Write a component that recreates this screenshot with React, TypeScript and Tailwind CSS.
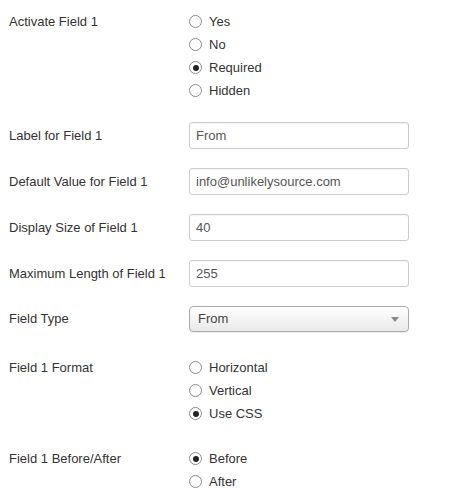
import React from "react";

type Opt = { label: string; checked?: boolean };

function Radio({ label, checked }: Opt) {
  return (
    <div className="flex h-[23px] items-center">
      <span className="flex h-[13px] w-[13px] items-center justify-center rounded-full border border-[#8a8a8a] bg-white">
        {checked ? <span className="h-[6px] w-[6px] rounded-full bg-[#222]" /> : null}
      </span>
      <span className="ml-[7px] text-[#333]">{label}</span>
    </div>
  );
}

function RadioRow({ label, options, className = "" }: { label: string; options: Opt[]; className?: string }) {
  return (
    <div className={`flex ${className}`}>
      <div className="flex h-[23px] w-[180px] items-center pl-[9px] text-[#333]">{label}</div>
      <div className="ml-[9px] flex flex-col">
        {options.map((o) => (
          <Radio key={o.label} {...o} />
        ))}
      </div>
    </div>
  );
}

function InputRow({ label, value, className = "" }: { label: string; value: string; className?: string }) {
  return (
    <div className={`flex items-center ${className}`}>
      <div className="w-[180px] pl-[9px] text-[#333]">{label}</div>
      <div className="ml-[9px] flex h-[27px] w-[220px] items-center rounded-[3px] border border-[#ccc] bg-white px-[6px] text-[#555] shadow-[inset_0_1px_1px_rgba(0,0,0,0.04)]">
        {value}
      </div>
    </div>
  );
}

export default function App() {
  return (
    <div className="h-[504px] w-[456px] bg-white pt-[10px] text-[13px] font-['Liberation_Sans',Arial,sans-serif]">
      <RadioRow
        label="Activate Field 1"
        options={[{ label: "Yes" }, { label: "No" }, { label: "Required", checked: true }, { label: "Hidden" }]}
      />
      <InputRow className="mt-[20px]" label="Label for Field 1" value="From" />
      <InputRow className="mt-[19px]" label="Default Value for Field 1" value="info@unlikelysource.com" />
      <InputRow className="mt-[19px]" label="Display Size of Field 1" value="40" />
      <InputRow className="mt-[19px]" label="Maximum Length of Field 1" value="255" />
      <div className="mt-[19px] flex items-center">
        <div className="w-[180px] pl-[9px] text-[#333]">Field Type</div>
        <div className="ml-[9px] flex h-[26px] w-[220px] items-center justify-between rounded-[4px] border border-[#aaa] bg-gradient-to-b from-white to-[#e9e9e9] pl-[8px] pr-[9px] text-[#444] shadow-[0_1px_1px_rgba(0,0,0,0.08)]">
          <span>From</span>
          <svg width="8" height="5" viewBox="0 0 8 5">
            <path d="M0 0h8L4 5z" fill="#888" />
          </svg>
        </div>
      </div>
      <RadioRow
        className="mt-[24px]"
        label="Field 1 Format"
        options={[{ label: "Horizontal" }, { label: "Vertical" }, { label: "Use CSS", checked: true }]}
      />
      <RadioRow
        className="mt-[22px]"
        label="Field 1 Before/After"
        options={[{ label: "Before", checked: true }, { label: "After" }]}
      />
    </div>
  );
}
